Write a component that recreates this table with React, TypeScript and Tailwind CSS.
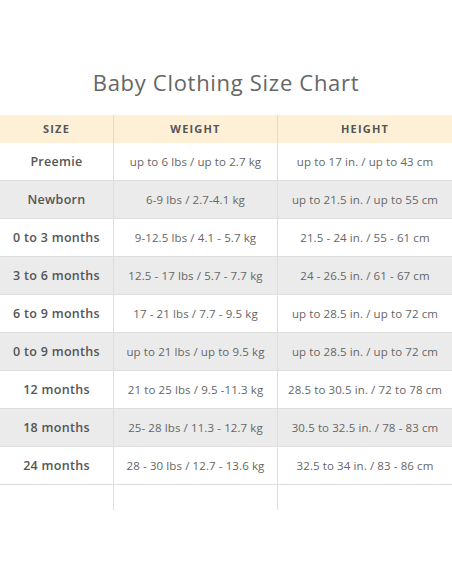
import React from "react";

const rows = [
  ["Preemie", "up to 6 lbs / up to 2.7 kg", "up to 17 in. / up to 43 cm"],
  ["Newborn", "6-9 lbs / 2.7-4.1 kg", "up to 21.5 in. / up to 55 cm"],
  ["0 to 3 months", "9-12.5 lbs / 4.1 - 5.7 kg", "21.5 - 24 in. / 55 - 61 cm"],
  ["3 to 6 months", "12.5 - 17 lbs / 5.7 - 7.7 kg", "24 - 26.5 in. / 61 - 67 cm"],
  ["6 to 9 months", "17 - 21 lbs / 7.7 - 9.5 kg", "up to 28.5 in. / up to 72 cm"],
  ["0 to 9 months", "up to 21 lbs / up to 9.5 kg", "up to 28.5 in. / up to 72 cm"],
  ["12 months", "21 to 25 lbs / 9.5 -11.3 kg", "28.5 to 30.5 in. / 72 to 78 cm"],
  ["18 months", "25- 28 lbs / 11.3 - 12.7 kg", "30.5 to 32.5 in. / 78 - 83 cm"],
  ["24 months", "28 - 30 lbs / 12.7 - 13.6 kg", "32.5 to 34 in. / 83 - 86 cm"],
];

const cols = "grid grid-cols-[113px_164px_175px]";

export default function App() {
  return (
    <main
      className="w-[452px] h-[584px] bg-white text-[#666]"
      style={{ fontFamily: "'Open Sans', sans-serif" }}
    >
      <h1 className="pt-[66px] h-[115px] text-center text-[22px] text-[#666] tracking-[0.7px]">
        Baby Clothing Size Chart
      </h1>

      {/* Header */}
      <div className={`${cols} h-[28px] bg-[#fdf0d7] text-[11px] font-bold tracking-[1.2px] text-[#555]`}>
        <div className="flex items-center justify-center">SIZE</div>
        <div className="flex items-center justify-center border-l border-[#e2dccf]">WEIGHT</div>
        <div className="flex items-center justify-center border-l border-[#e2dccf]">HEIGHT</div>
      </div>

      {/* Rows */}
      {rows.map((r, i) => (
        <div
          key={r[0] + i}
          className={`${cols} h-[38px] border-b border-[#dedede] ${i % 2 === 1 ? "bg-[#ebebeb]" : "bg-white"}`}
        >
          <div className="flex items-center justify-center pt-[2px] text-[12.5px] font-semibold tracking-[0.3px] text-[#555]">
            {r[0]}
          </div>
          <div className="flex items-center justify-center border-l border-[#dedede] text-[11.5px] tracking-[0.1px]">
            {r[1]}
          </div>
          <div className="flex items-center justify-center border-l border-[#dedede] text-[11.5px] tracking-[0.1px]">
            {r[2]}
          </div>
        </div>
      ))}

      {/* Empty trailing row */}
      <div className={`${cols} h-[25px]`}>
        <div />
        <div className="border-l border-[#dedede]" />
        <div className="border-l border-[#dedede]" />
      </div>
    </main>
  );
}
